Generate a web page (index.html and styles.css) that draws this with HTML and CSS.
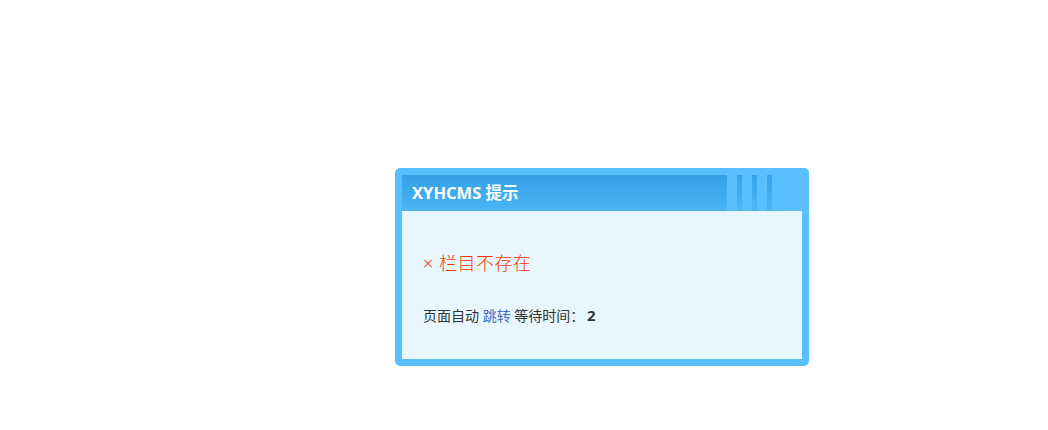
FILE: index.html
```html
<!DOCTYPE html>
<html lang="zh-CN">
<head>
	<meta charset="UTF-8">
	<title>XYHCMS 提示</title>
	<link rel="stylesheet" href="styles.css">
</head>
<body>
	<div class="msgBox">
		<div class="msgHead">
			<h2 class="msgTitle">XYHCMS 提示</h2>
			<div class="stripes">
				<span></span><span></span><span></span>
			</div>
		</div>
		<div class="msgBody">
			<p class="error">&times; 栏目不存在</p>
			<p class="jump">页面自动 <a href="#">跳转</a> 等待时间： <b id="wait">2</b></p>
		</div>
	</div>
</body>
</html>
```

FILE: styles.css
```css
body {
	margin: 0;
	font-family: "Noto Sans", "Noto Sans CJK SC", sans-serif;
	background: #fff;
}

.msgBox {
	width: 400px;
	margin: 168px 0 0 395px;
	border: 7px solid #5abfff;
	border-radius: 5px;
	background: #e8f7fd;
}

.msgHead { display: flex; height: 36px; background: #5abfff; }

.msgTitle {
	width: 315px;
	margin: 0;
	padding-left: 10px;
	font-size: 16.5px;
	line-height: 36px;
	color: #fff;
	background: linear-gradient(#33a0e6, #4bb5f7);
}

.stripes { display: flex; gap: 10px; padding-left: 10px; }
.stripes > span {
	width: 5px;
	background: linear-gradient(#37a2e8, #4db6f7);
}

.msgBody { height: 148px; padding: 0 20px 0 21px; box-sizing: border-box; overflow: hidden; }

.error {
	margin: 40px 0 0;
	font-size: 18px;
	font-weight: 300;
	line-height: 24px;
	letter-spacing: 0.5px;
	color: #ff3300;
}

.jump {
	margin: 30px 0 0;
	font-size: 14px;
	line-height: 20px;
	color: #333;
}
.jump a { color: #3a6fc7; text-decoration: none; }
.jump b { font-size: 15px; margin-left: -1px; }
```
